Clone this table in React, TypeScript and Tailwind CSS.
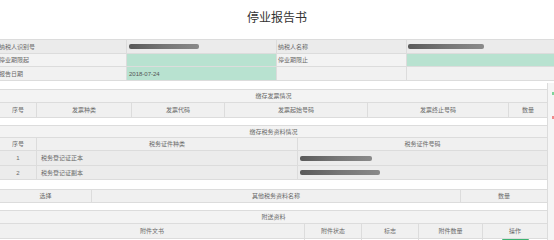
import React from "react";

const line = "border-[#dcdcdc]";

function Bar({ w }: { w: number }) {
  return (
    <span
      className="inline-block h-[5px] rounded-[2px] bg-gradient-to-r from-[#5a5a5a] via-[#767676] to-[#8a8a8a]"
      style={{ width: w }}
    />
  );
}

function Cell({
  children,
  className = "",
}: {
  children?: React.ReactNode;
  className?: string;
}) {
  return (
    <div className={`flex items-center border-r ${line} last:border-r-0 ${className}`}>
      {children}
    </div>
  );
}

export default function App() {
  return (
    <div className="h-[240px] w-[554px] overflow-hidden bg-white font-['Liberation_Sans','Noto_Sans_CJK_SC',sans-serif] text-[6px] leading-none text-[#6a6a6a]">
      {/* title */}
      <div className="flex h-[39px] items-center justify-center pb-[3px] text-[12px] text-[#333]">
        停业报告书
      </div>

      {/* basic info */}
      <div className={`border-t ${line}`}>
        <div className={`grid h-[14px] grid-cols-[127px_150px_130px_147px] border-b ${line} bg-[#ebebeb]`}>
          <Cell className="-ml-[1px]">纳税人识别号</Cell>
          <Cell className="pl-[2px]"><Bar w={70} /></Cell>
          <Cell className="pl-[1px]">纳税人名称</Cell>
          <Cell className="pl-[1px]"><Bar w={76} /></Cell>
        </div>
        <div className={`grid h-[13px] grid-cols-[127px_150px_130px_147px] border-b ${line}`}>
          <Cell className="-ml-[1px] bg-[#f3f3f3]">停业期限起</Cell>
          <Cell className="bg-[#b8e2d0]" />
          <Cell className="bg-[#f3f3f3] pl-[1px]">停业期限止</Cell>
          <Cell className="bg-[#b8e2d0]" />
        </div>
        <div className={`grid h-[14px] grid-cols-[127px_150px_130px_147px] border-b ${line} bg-[#f1f1f1]`}>
          <Cell className="-ml-[1px]">报告日期</Cell>
          <Cell className="bg-[#b8e2d0] pl-[2px] text-[#555]">2018-07-24</Cell>
          <Cell />
          <Cell />
        </div>
      </div>

      <div className="flex">
        <div className="w-[547px]">
          <div className="h-[8px]" />

          {/* 缴存发票情况 */}
          <div className={`border-t ${line}`}>
            <div className={`flex h-[13px] items-center justify-center border-b ${line} bg-[#f3f3f3]`}>
              缴存发票情况
            </div>
            <div className={`grid h-[15px] grid-cols-[37px_95px_93px_143px_141px_38px] border-b ${line} bg-[#f0f0f0]`}>
              <Cell className="justify-center">序号</Cell>
              <Cell className="justify-center">发票种类</Cell>
              <Cell className="justify-center">发票代码</Cell>
              <Cell className="justify-center">发票起始号码</Cell>
              <Cell className="justify-center">发票终止号码</Cell>
              <Cell className="justify-center">数量</Cell>
            </div>
            <div className={`h-[8px] border-b ${line} bg-white`} />
          </div>

          {/* 缴存税务资料情况 */}
          <div>
            <div className={`flex h-[12px] items-center justify-center border-b ${line} bg-[#f3f3f3]`}>
              缴存税务资料情况
            </div>
            <div className={`grid h-[13px] grid-cols-[37px_261px_249px] border-b ${line} bg-[#f0f0f0]`}>
              <Cell className="justify-center">序号</Cell>
              <Cell className="justify-center">税务证件种类</Cell>
              <Cell className="justify-center">税务证件号码</Cell>
            </div>
            <div className={`grid h-[15px] grid-cols-[37px_261px_249px] border-b ${line} bg-[#ececec]`}>
              <Cell className="justify-center">1</Cell>
              <Cell className="pl-[4px]">税务登记证正本</Cell>
              <Cell className="pl-[2px]"><Bar w={72} /></Cell>
            </div>
            <div className={`grid h-[14px] grid-cols-[37px_261px_249px] border-b ${line} bg-[#ececec]`}>
              <Cell className="justify-center">2</Cell>
              <Cell className="pl-[4px]">税务登记证副本</Cell>
              <Cell className="pl-[2px]"><Bar w={80} /></Cell>
            </div>
          </div>

          <div className="h-[9px]" />

          {/* 其他税务资料 */}
          <div className={`border-t ${line}`}>
            <div className={`grid h-[13px] grid-cols-[92px_369px_86px] border-b ${line} bg-[#f0f0f0]`}>
              <Cell className="justify-center">选择</Cell>
              <Cell className="justify-center">其他税务资料名称</Cell>
              <Cell className="justify-center">数量</Cell>
            </div>
            <div className={`h-[8px] border-b ${line} bg-white`} />
          </div>

          {/* 附送资料 */}
          <div>
            <div className={`flex h-[13px] items-center justify-center border-b ${line} bg-[#f3f3f3]`}>
              附送资料
            </div>
            <div className={`grid h-[15px] grid-cols-[305px_57px_57px_64px_64px] border-b ${line} bg-[#f0f0f0]`}>
              <Cell className="justify-center">附件文书</Cell>
              <Cell className="justify-center">附件状态</Cell>
              <Cell className="justify-center">标志</Cell>
              <Cell className="justify-center">附件数量</Cell>
              <Cell className="justify-center">操作</Cell>
            </div>
            <div className="grid h-[10px] grid-cols-[305px_57px_57px_64px_64px]">
              <Cell />
              <Cell />
              <Cell />
              <Cell />
              <Cell className="items-start justify-center">
                <span className="h-[3px] w-[27px] rounded-t-[1px] bg-[#3cb371]" />
              </Cell>
            </div>
          </div>
        </div>

        {/* right edge strip */}
        <div className={`relative mt-[2px] w-[7px] border-l ${line} bg-[#f5f5f5]`}>
          <span className="absolute right-0 top-[9px] h-[3px] w-[2px] bg-[#7fd49a]" />
          <span className="absolute right-0 top-[33px] h-[3px] w-[2px] bg-[#f08a8a]" />
        </div>
      </div>
    </div>
  );
}
